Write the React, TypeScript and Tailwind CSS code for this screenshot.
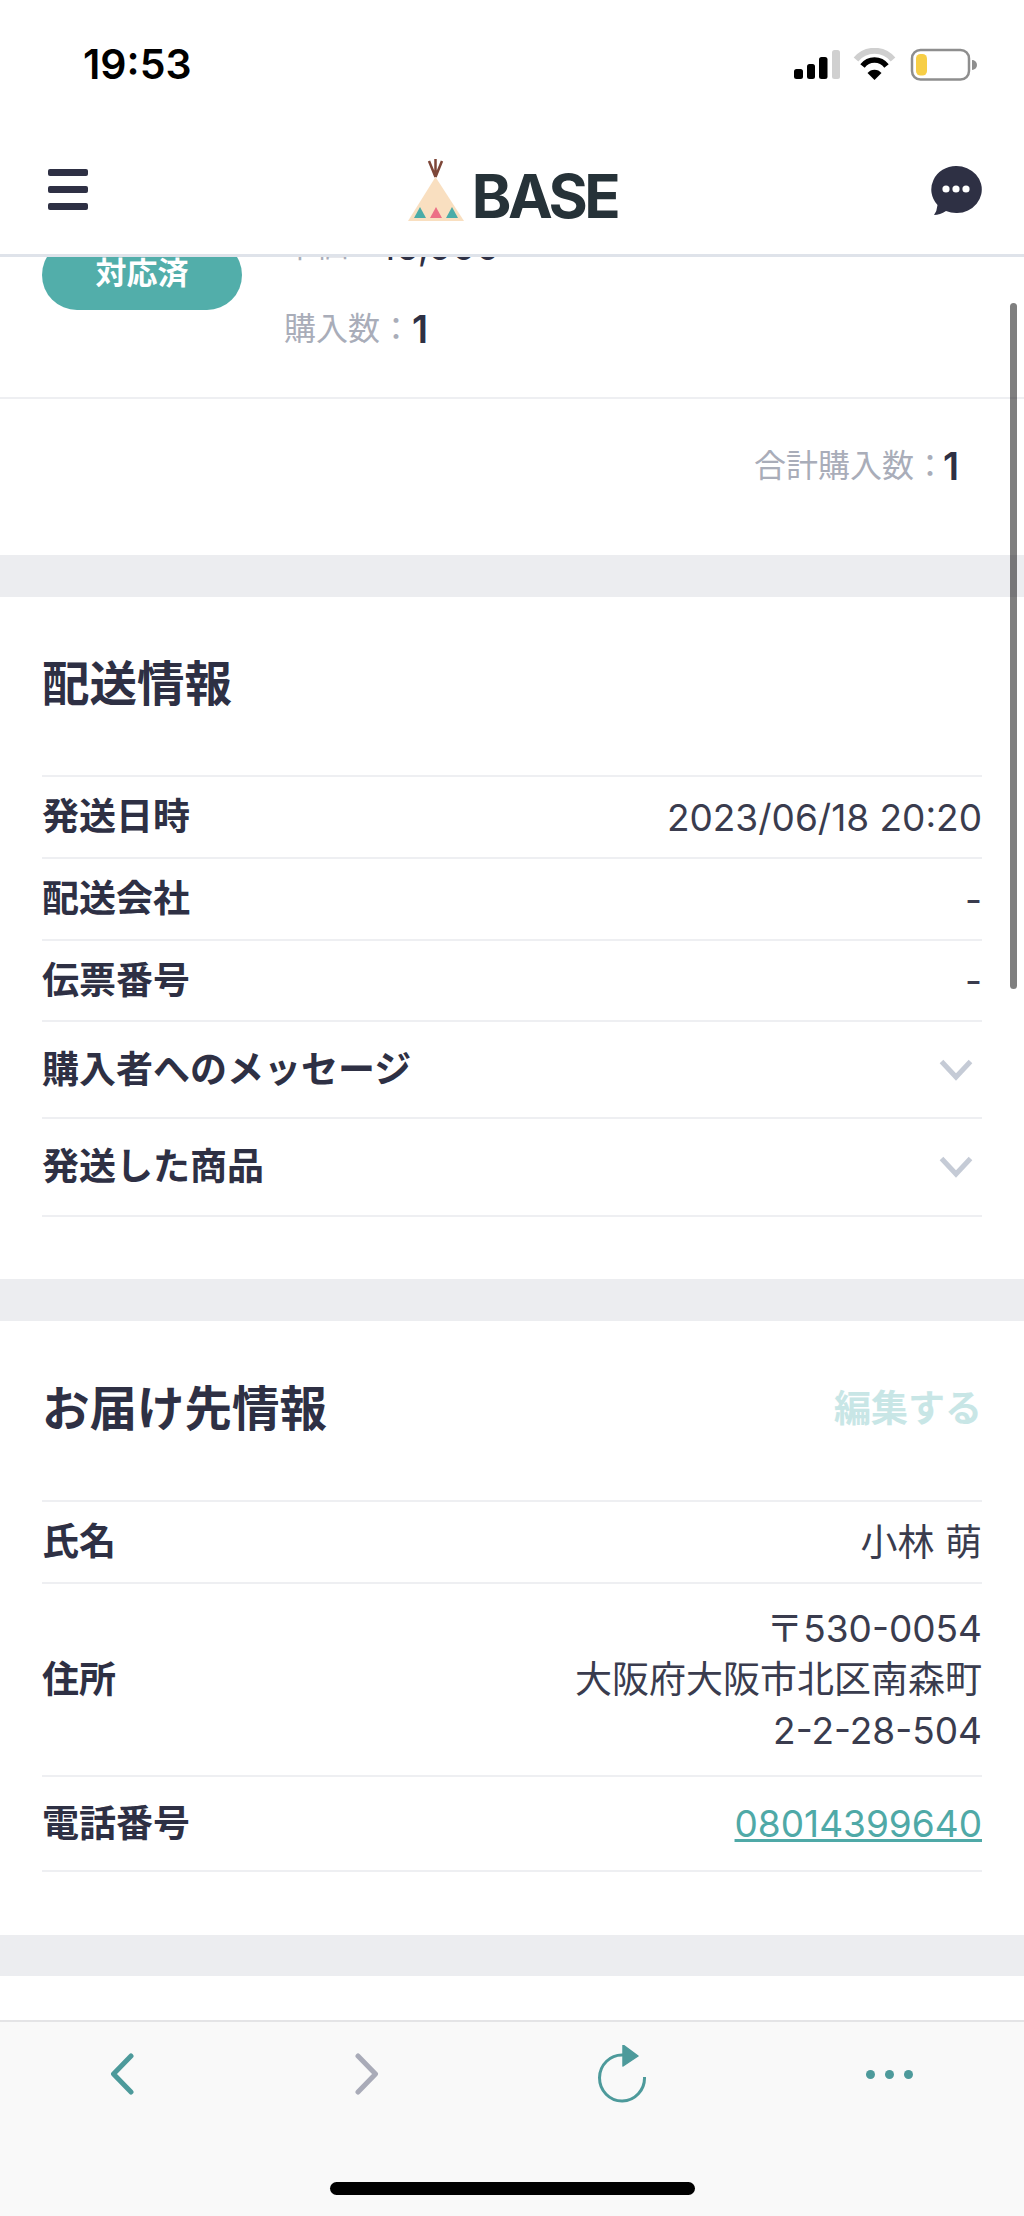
import React from "react";

const sans = "font-['Inter','Noto_Sans_CJK_JP',sans-serif]";

function StatusIcons() {
  return (
    <svg width="184" height="34" viewBox="793 48 184 34" fill="none">
      <rect x="794" y="69" width="9" height="10" rx="2.5" fill="#000" />
      <rect x="807" y="64" width="8" height="15" rx="2.5" fill="#000" />
      <rect x="819" y="57" width="8.5" height="22" rx="2.5" fill="#000" />
      <rect x="832" y="50" width="8" height="29" rx="2.5" fill="#d0d0d0" />
      <path d="M856 59.5 a24 24 0 0 1 37 0" stroke="#cfcfcf" strokeWidth="6" />
      <path d="M862.5 66 a15 15 0 0 1 24 0" stroke="#000" strokeWidth="5.5" />
      <path d="M874.5 80 l-7 -7 a9 9 0 0 1 14 0 z" fill="#000" />
      <rect x="912" y="50" width="57" height="29.5" rx="8.5" stroke="#8e8e8e" strokeWidth="2.5" />
      <rect x="916" y="54" width="11" height="21.5" rx="4.5" fill="#f7ce46" />
      <path d="M972 60 a5 5 0 0 1 0 10 z" fill="#8e8e8e" />
    </svg>
  );
}

function Logo() {
  return (
    <div className="flex items-end gap-[7px]">
      <svg width="58" height="63" viewBox="406 159 58 63" fill="none">
        <path d="M434.5 177 L407 221 H463 Z" fill="#f9dfc0" />
        <path d="M434.5 177 L428 161 M434.5 177 V159 M434.5 177 L441 161" stroke="#7d4638" strokeWidth="2.5" />
        <path d="M413 218 L419 207 L425 218 Z" fill="#4aaca8" />
        <path d="M429 218 L435 207 L441 218 Z" fill="#ec6f86" />
        <path d="M445 218 L451 207 L457 218 Z" fill="#4aaca8" />
      </svg>
      <span className="font-['Inter',sans-serif] text-[60px] leading-[52px] font-bold tracking-[-3.5px] text-[#263238]">
        BASE
      </span>
    </div>
  );
}

function ChatIcon() {
  return (
    <svg width="52" height="50" viewBox="931 166 52 50">
      <path
        d="M957 166 a25.5 23.5 0 1 1 -10 45 q-6 4 -12 4 q3 -4 3.5 -10 A25 23.5 0 0 1 957 166 Z"
        fill="#2e3044"
      />
      <circle cx="947" cy="189" r="3.6" fill="#fff" />
      <circle cx="957" cy="189" r="3.6" fill="#fff" />
      <circle cx="967" cy="189" r="3.6" fill="#fff" />
    </svg>
  );
}

function Chevron() {
  return (
    <svg className="mr-[9px]" width="34" height="22" viewBox="0 0 34 22" fill="none">
      <path d="M2.5 2.5 L17 18 L31.5 2.5" stroke="#c5cbd6" strokeWidth="5" />
    </svg>
  );
}

function Row({
  label,
  height,
  children,
}: {
  label: string;
  height: string;
  children?: React.ReactNode;
}) {
  return (
    <div className={`flex items-center justify-between border-t-2 border-[#eeeff2] ${height}`}>
      <span className="text-[37px] font-bold text-[#2e3044]">{label}</span>
      <div className="text-right text-[37px] leading-[51px] text-[#3a3c4e]">{children}</div>
    </div>
  );
}

function Header() {
  return (
    <div className="h-[257px] shrink-0 border-b-[3px] border-[#dfe3ea] bg-white">
      <div className="flex h-[130px] items-center justify-between pl-[83px] pr-[47px]">
        <span className="text-[41px] font-semibold text-black">19:53</span>
        <StatusIcons />
      </div>
      <div className="grid h-[124px] grid-cols-[1fr_auto_1fr] items-center pb-[3px] px-[42px]">
        <div className="mb-[2px] ml-[6px] flex w-[40px] flex-col gap-[10px]">
          <div className="h-[7px] rounded-[2px] bg-[#2e3044]" />
          <div className="h-[7px] rounded-[2px] bg-[#2e3044]" />
          <div className="h-[7px] rounded-[2px] bg-[#2e3044]" />
        </div>
        <Logo />
        <div className="flex justify-end">
          <ChatIcon />
        </div>
      </div>
    </div>
  );
}

function Footer() {
  return (
    <div className="h-[196px] shrink-0 border-t-2 border-[#e4e4e6] bg-[#f9f9f9]">
      <div className="flex h-[104px] items-center pl-[110px]">
        <svg width="24" height="42" viewBox="0 0 24 42" fill="none">
          <path d="M21 3 L3.5 21 L21 39" stroke="#4d9a9b" strokeWidth="5" strokeLinecap="round" strokeLinejoin="round" />
        </svg>
        <svg className="ml-[221px]" width="24" height="42" viewBox="0 0 24 42" fill="none">
          <path d="M3 3 L20.5 21 L3 39" stroke="#a9abb8" strokeWidth="5" strokeLinecap="round" strokeLinejoin="round" />
        </svg>
        <svg className="ml-[219px]" width="50" height="58" viewBox="598 2046 50 58" fill="none">
          <path d="M644.5 2078 A22.5 23 0 1 1 623 2056" stroke="#4d9a9b" strokeWidth="3" />
          <path d="M623 2046 L638 2057 L623 2067 Z" fill="#4d9a9b" stroke="#4d9a9b" strokeWidth="1.5" strokeLinejoin="round" />
        </svg>
        <div className="ml-[218px] flex gap-[10px]">
          <div className="h-[9px] w-[9px] rounded-full bg-[#4d9a9b]" />
          <div className="h-[9px] w-[9px] rounded-full bg-[#4d9a9b]" />
          <div className="h-[9px] w-[9px] rounded-full bg-[#4d9a9b]" />
        </div>
      </div>
      <div className="mx-auto mt-[56px] h-[13px] w-[365px] rounded-full bg-black" />
    </div>
  );
}

export default function App() {
  return (
    <div className={`${sans} relative flex h-[2216px] w-[1024px] flex-col overflow-hidden bg-white`}>
      <Header />
      <main className="flex-1 overflow-hidden">
        {/* order item, scrolled under the header */}
        <div className="-mt-[40px] flex h-[182px] items-start border-b-[2px] border-[#eeeff2] pl-[42px]">
          <div className="mt-[23px] flex h-[70px] w-[200px] items-center justify-center rounded-full bg-[#52aeaa] pb-[4px] text-[31px] font-bold text-white">
            対応済
          </div>
          <div className="ml-[42px] mt-[3px] text-[32px]">
            <div className="flex h-[52px] items-center">
              <span className="text-[#a9adb9]">単価：</span>
              <span className="text-[38px] text-[#2e3044]">16,000</span>
            </div>
            <div className="mt-[31px] flex h-[52px] items-center">
              <span className="text-[#a9adb9]">購入数：</span>
              <span className="text-[38px] font-semibold text-[#2e3044]">1</span>
            </div>
          </div>
        </div>
        <div className="flex h-[156px] items-center justify-end pb-[22px] pr-[65px] text-[32px]">
          <span className="-mr-[3px] text-[#a9adb9]">合計購入数：</span>
          <span className="text-[38px] font-semibold text-[#2e3044]">1</span>
        </div>

        <div className="h-[42px] bg-[#ecedf0]" />

        <section className="h-[682px] px-[42px]">
          <div className="flex h-[178px] items-center pb-[4px] text-[47.5px] font-bold text-[#2e3044]">配送情報</div>
          <Row label="発送日時" height="h-[82px]">2023/06/18 20:20</Row>
          <Row label="配送会社" height="h-[82px]">-</Row>
          <Row label="伝票番号" height="h-[81px]">-</Row>
          <Row label="購入者へのメッセージ" height="h-[97px]"><Chevron /></Row>
          <Row label="発送した商品" height="h-[98px]"><Chevron /></Row>
          <div className="border-t-2 border-[#eeeff2]" />
        </section>

        <div className="h-[42px] bg-[#ecedf0]" />

        <section className="h-[614px] px-[42px]">
          <div className="flex h-[179px] items-center justify-between pb-[4px]">
            <span className="text-[47.5px] font-bold text-[#2e3044]">お届け先情報</span>
            <span className="text-[37px] font-bold text-[#c8e6e6]">編集する</span>
          </div>
          <Row label="氏名" height="h-[82px]">小林 萌</Row>
          <Row label="住所" height="h-[193px]">
            〒530-0054
            <br />
            大阪府大阪市北区南森町
            <br />
            2-2-28-504
          </Row>
          <Row label="電話番号" height="h-[95px]">
            <span className="text-[#4fa9a7] underline">08014399640</span>
          </Row>
          <div className="border-t-2 border-[#eeeff2]" />
        </section>

        <div className="h-[41px] bg-[#ecedf0]" />
      </main>
      <Footer />
      {/* scroll indicator */}
      <div className="absolute left-[1010px] top-[303px] h-[686px] w-[7px] rounded-full bg-black/50" />
    </div>
  );
}
